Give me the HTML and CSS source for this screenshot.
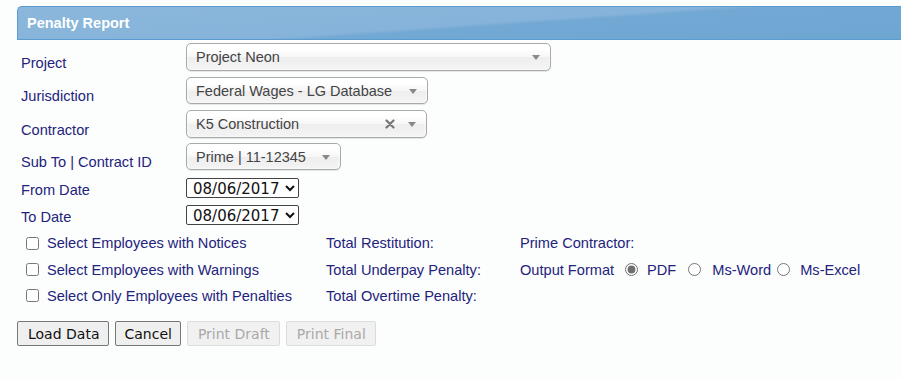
FILE: index.html
```html
<!DOCTYPE html>
<html>
<head>
<meta charset="utf-8">
<link rel="stylesheet" href="styles.css">
</head>
<body>
<div class="page">
  <div class="panel-head">Penalty Report</div>

  <div class="form">
    <div class="row r-project">
      <div class="lbl">Project</div>
      <div class="chosen w-project"><span class="val">Project Neon</span><span class="arrow"></span></div>
    </div>
    <div class="row r-jur">
      <div class="lbl">Jurisdiction</div>
      <div class="chosen w-jur"><span class="val">Federal Wages - LG Database</span><span class="arrow"></span></div>
    </div>
    <div class="row r-con">
      <div class="lbl">Contractor</div>
      <div class="chosen w-con"><span class="val">K5 Construction</span>
        <svg class="clear" width="10" height="10" viewBox="0 0 10 10"><path d="M1.5 1.5 L8.5 8.5 M8.5 1.5 L1.5 8.5" stroke="#777" stroke-width="2.2" stroke-linecap="round"/></svg>
        <span class="arrow"></span></div>
    </div>
    <div class="row r-sub">
      <div class="lbl">Sub To | Contract ID</div>
      <div class="chosen w-sub"><span class="val">Prime | 11-12345</span><span class="arrow"></span></div>
    </div>
    <div class="row r-from">
      <div class="lbl">From Date</div>
      <select class="date"><option>08/06/2017</option></select>
    </div>
    <div class="row r-to">
      <div class="lbl">To Date</div>
      <select class="date"><option>08/06/2017</option></select>
    </div>
  </div>

  <div class="opts">
    <label class="chk"><input type="checkbox"><span>Select Employees with Notices</span></label>
    <div class="txt">Total Restitution:</div>
    <div class="txt">Prime Contractor:</div>

    <label class="chk"><input type="checkbox"><span>Select Employees with Warnings</span></label>
    <div class="txt">Total Underpay Penalty:</div>
    <div class="txt fmt">Output Format
      <label class="rad r1"><input type="radio" name="f" checked><span>PDF</span></label>
      <label class="rad r2"><input type="radio" name="f"><span>Ms-Word</span></label>
      <label class="rad r3"><input type="radio" name="f"><span>Ms-Excel</span></label>
    </div>

    <label class="chk"><input type="checkbox"><span>Select Only Employees with Penalties</span></label>
    <div class="txt">Total Overtime Penalty:</div>
    <div></div>
  </div>

  <div class="buttons">
    <button class="btn">Load Data</button>
    <button class="btn narrow">Cancel</button>
    <button class="btn" disabled>Print Draft</button>
    <button class="btn" disabled>Print Final</button>
  </div>
</div>
</body>
</html>
```

FILE: styles.css
```css
html, body {
  margin: 0;
  padding: 0;
  background: #fcfdfd;
}
body {
  font-family: "Liberation Sans", Arial, sans-serif;
  font-size: 14.6px;
  color: #23237c;
}
.page {
  padding: 6px 0 0 17px;
}
.panel-head {
  box-sizing: border-box;
  height: 34px;
  border: 1px solid #5b9bd0;
  border-right: none;
  border-radius: 5px 0 0 0;
  background: linear-gradient(176deg, #8bb7dc 0%, #86b3d9 52%, #72a8d4 56%, #6ea6d2 100%);
  color: #fff;
  font-weight: bold;
  font-size: 14.5px;
  line-height: 32px;
  padding-left: 9px;
}
.form {
  padding-left: 4px;
}
.row {
  display: flex;
  align-items: flex-end;
}
.lbl {
  width: 165px;
  flex: none;
  line-height: 16px;
}
.r-project { margin-top: 3px; }
.r-jur { margin-top: 6px; }
.r-con { margin-top: 6px; }
.r-sub { margin-top: 5px; }
.r-from { margin-top: 8px; }
.r-to { margin-top: 7px; }

.chosen {
  box-sizing: border-box;
  height: 28px;
  border: 1px solid #aaa;
  border-radius: 5px;
  background: linear-gradient(#ffffff 20%, #f6f6f6 50%, #eeeeee 52%, #f4f4f4 100%);
  box-shadow: 0 0 3px #fff inset, 0 1px 1px rgba(0,0,0,0.1);
  display: flex;
  align-items: center;
  padding: 0 10px 0 9px;
  color: #444;
  font-size: 14.5px;
}
.r-jur .chosen, .r-sub .chosen { height: 27px; }
.val { flex: 1; white-space: nowrap; }
.arrow {
  width: 0;
  height: 0;
  border-left: 4px solid transparent;
  border-right: 4px solid transparent;
  border-top: 5px solid #888;
  margin-top: 1px;
}
.clear { margin-right: 13px; }
.w-project { width: 365px; }
.w-jur { width: 242px; }
.w-con { width: 241px; }
.w-sub { width: 155px; }

.date {
  width: 113px;
  height: 20px;
  box-sizing: border-box;
  font-family: "DejaVu Sans", Verdana, sans-serif;
  font-size: 15px;
  color: #111;
  border: 1px solid #444;
  border-radius: 2px;
  background: #fff;
  padding: 0 0 0 2px;
}

.opts {
  display: grid;
  grid-template-columns: 301px 194px auto;
  grid-auto-rows: 26.4px;
  margin-top: 5px;
  padding-left: 8px;
  align-items: center;
}
.chk {
  display: flex;
  align-items: center;
}
.chk input {
  width: 13px;
  height: 13px;
  margin: 0 8px 0 1px;
}
.fmt {
  display: flex;
  align-items: center;
  white-space: nowrap;
}
.rad {
  display: flex;
  align-items: center;
}
.rad input {
  width: 13px;
  height: 13px;
  accent-color: #6f6f6f;
}
.r1 input { margin: 0 9px 0 11px; }
.r2 input { margin: 0 11px 0 12px; }
.r3 input { margin: 0 10px 0 6px; }

.buttons {
  display: flex;
  gap: 6px;
  margin-top: 12px;
}
.btn {
  height: 25px;
  box-sizing: border-box;
  font-family: "DejaVu Sans", Verdana, sans-serif;
  font-size: 14px;
  color: #111;
  background: #efefef;
  border: 1px solid #767676;
  border-radius: 2px;
  padding: 0 9px 0 10px;
}
.btn.narrow { padding: 0 8px; }
.btn:disabled {
  color: #a9a9a9;
  background: #f1f1f1;
  border-color: #dcdcdc;
}
```
